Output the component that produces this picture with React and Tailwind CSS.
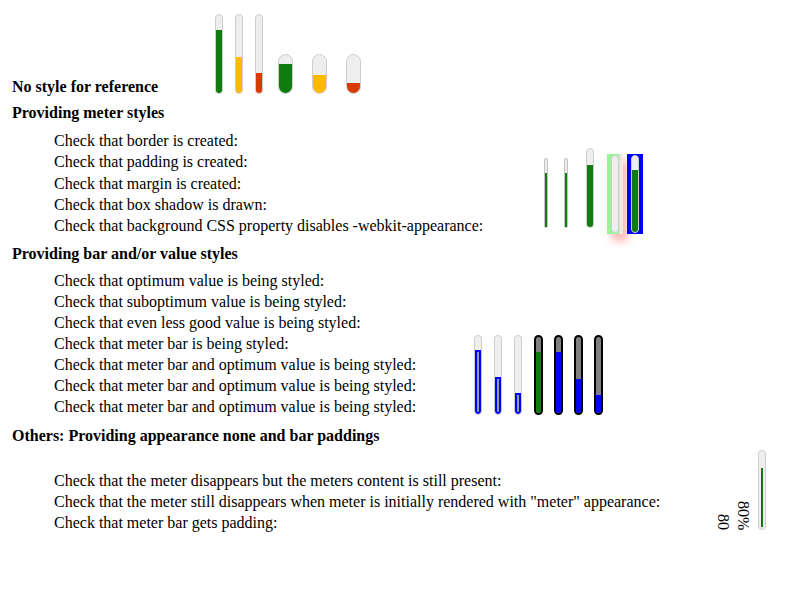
import React from 'react';

const GREEN = '#107c10';
const YELLOW = '#ffb900';
const RED = '#d83b01';

// light gray rounded track, fill grows from the bottom
function Meter({ w, h, fill, color, track = 'bg-[#eeeeee] border border-[#cdcdcd]', fillClass = '', className = '' }) {
  return (
    <div
      className={`flex flex-col justify-end overflow-hidden rounded-full shrink-0 ${track} ${className}`}
      style={{ width: w, height: h }}
    >
      {fill > 0 && (
        <div className={`w-full shrink-0 ${fillClass}`} style={{ height: fill, backgroundColor: color }} />
      )}
    </div>
  );
}

export default function App() {
  return (
    <div className="w-[800px] h-[600px] bg-white text-black text-[16px] [font-family:'Liberation_Serif','Times_New_Roman',serif] overflow-hidden">
      {/* No style */}
      <div className="flex items-end pt-[14px]">
        <div className="w-[215px] pl-[12px] font-bold leading-[21px] mb-[-3px]">No style for reference</div>
        <div className="flex items-end">
          <Meter w={8} h={80} fill={63} color={GREEN} />
          <Meter w={8} h={80} fill={36} color={YELLOW} className="ml-[12px]" />
          <Meter w={8} h={80} fill={20} color={RED} className="ml-[12px]" />
          <Meter w={15} h={40} fill={29} color={GREEN} className="ml-[15px]" />
          <Meter w={15} h={40} fill={18} color={YELLOW} className="ml-[19px]" />
          <Meter w={15} h={40} fill={10} color={RED} className="ml-[19px]" />
        </div>
      </div>

      {/* Meter styles */}
      <div className="mt-[8px] pl-[12px] font-bold leading-[21px]">Providing meter styles</div>
      <div className="flex items-end mt-[7px]">
        <div className="w-[544px] pl-[54px] leading-[21.25px] shrink-0">
          <div>Check that border is created:</div>
          <div>Check that padding is created:</div>
          <div>Check that margin is created:</div>
          <div>Check that box shadow is drawn:</div>
          <div>Check that background CSS property disables -webkit-appearance:</div>
        </div>
        <div className="flex items-end">
          <div className="w-[4px] h-[70px] mb-[8px] rounded-full bg-[#eeeeee] border border-[#c4c4c4] flex justify-center items-end">
            <div className="w-[2px] h-[54px] bg-[#107c10]" />
          </div>
          <div className="w-[4px] h-[70px] mb-[8px] ml-[16px] rounded-full bg-[#eeeeee] border border-[#c4c4c4] flex justify-center items-end">
            <div className="w-[2px] h-[54px] bg-[#107c10]" />
          </div>
          <Meter w={8} h={80} fill={62} color={GREEN} className="ml-[18px] mb-[8px]" />
          <div className="ml-[13px] mb-[2px] w-[16px] h-[80px] bg-[linear-gradient(to_right,#98f598_70%,#f4e6e6_85%)] shadow-[5px_7px_8px_rgba(255,90,90,0.45)] flex justify-center items-center">
            <Meter w={8} h={78} fill={0} color={GREEN} />
          </div>
          <div className="ml-[4px] mb-[2px] w-[16px] h-[80px] bg-[#0000ff] flex justify-center items-center">
            <Meter w={8} h={78} fill={62} color={GREEN} />
          </div>
        </div>
      </div>

      {/* Bar / value styles */}
      <div className="mt-[7px] pl-[12px] font-bold leading-[21px]">Providing bar and/or value styles</div>
      <div className="flex items-end mt-[6px]">
        <div className="w-[474px] pl-[54px] leading-[21px] shrink-0">
          <div>Check that optimum value is being styled:</div>
          <div>Check that suboptimum value is being styled:</div>
          <div>Check that even less good value is being styled:</div>
          <div>Check that meter bar is being styled:</div>
          <div>Check that meter bar and optimum value is being styled:</div>
          <div>Check that meter bar and optimum value is being styled:</div>
          <div>Check that meter bar and optimum value is being styled:</div>
        </div>
        <div className="flex items-end mb-[2px]">
          <Meter w={8} h={80} fill={64} color="#8fa0ac" fillClass="border-2 border-[#0000ff] rounded-b-full" />
          <Meter w={8} h={80} fill={37} color="#8fa0ac" fillClass="border-2 border-[#0000ff] rounded-b-full" className="ml-[12px]" />
          <Meter w={8} h={80} fill={21} color="#8fa0ac" fillClass="border-2 border-[#0000ff] rounded-b-full" className="ml-[12px]" />
          <Meter w={9} h={80} fill={61} color={GREEN} track="bg-[#808080] border-2 border-black" className="ml-[12px]" />
          <Meter w={9} h={80} fill={61} color="#0000ff" track="bg-[#808080] border-2 border-black" className="ml-[11px]" />
          <Meter w={9} h={80} fill={34} color="#0000ff" track="bg-[#808080] border-2 border-black" className="ml-[11px]" />
          <Meter w={9} h={80} fill={18} color="#0000ff" track="bg-[#808080] border-2 border-black" className="ml-[11px]" />
        </div>
      </div>

      {/* Others */}
      <div className="mt-[8px] pl-[12px] font-bold leading-[21px]">Others: Providing appearance none and bar paddings</div>
      <div className="flex items-end mt-[24px]">
        <div className="w-[718px] pl-[54px] leading-[21px] shrink-0">
          <div>Check that the meter disappears but the meters content is still present:</div>
          <div>Check that the meter still disappears when meter is initially rendered with "meter" appearance:</div>
          <div>Check that meter bar gets padding:</div>
        </div>
        <div className="flex items-end mb-[3px] mt-[-40px]">
          <div className="[writing-mode:vertical-rl] leading-[10px] w-[10px]">80</div>
          <div className="[writing-mode:vertical-rl] leading-[10px] w-[10px] ml-[10px]">80%</div>
          <div className="ml-[10px] w-[8px] h-[80px] rounded-full bg-[#eeeeee] border border-[#cdcdcd] flex flex-col justify-end items-center pb-[2px]">
            <div className="w-[2px] h-[59px] bg-[#107c10]" />
          </div>
        </div>
      </div>
    </div>
  );
}
